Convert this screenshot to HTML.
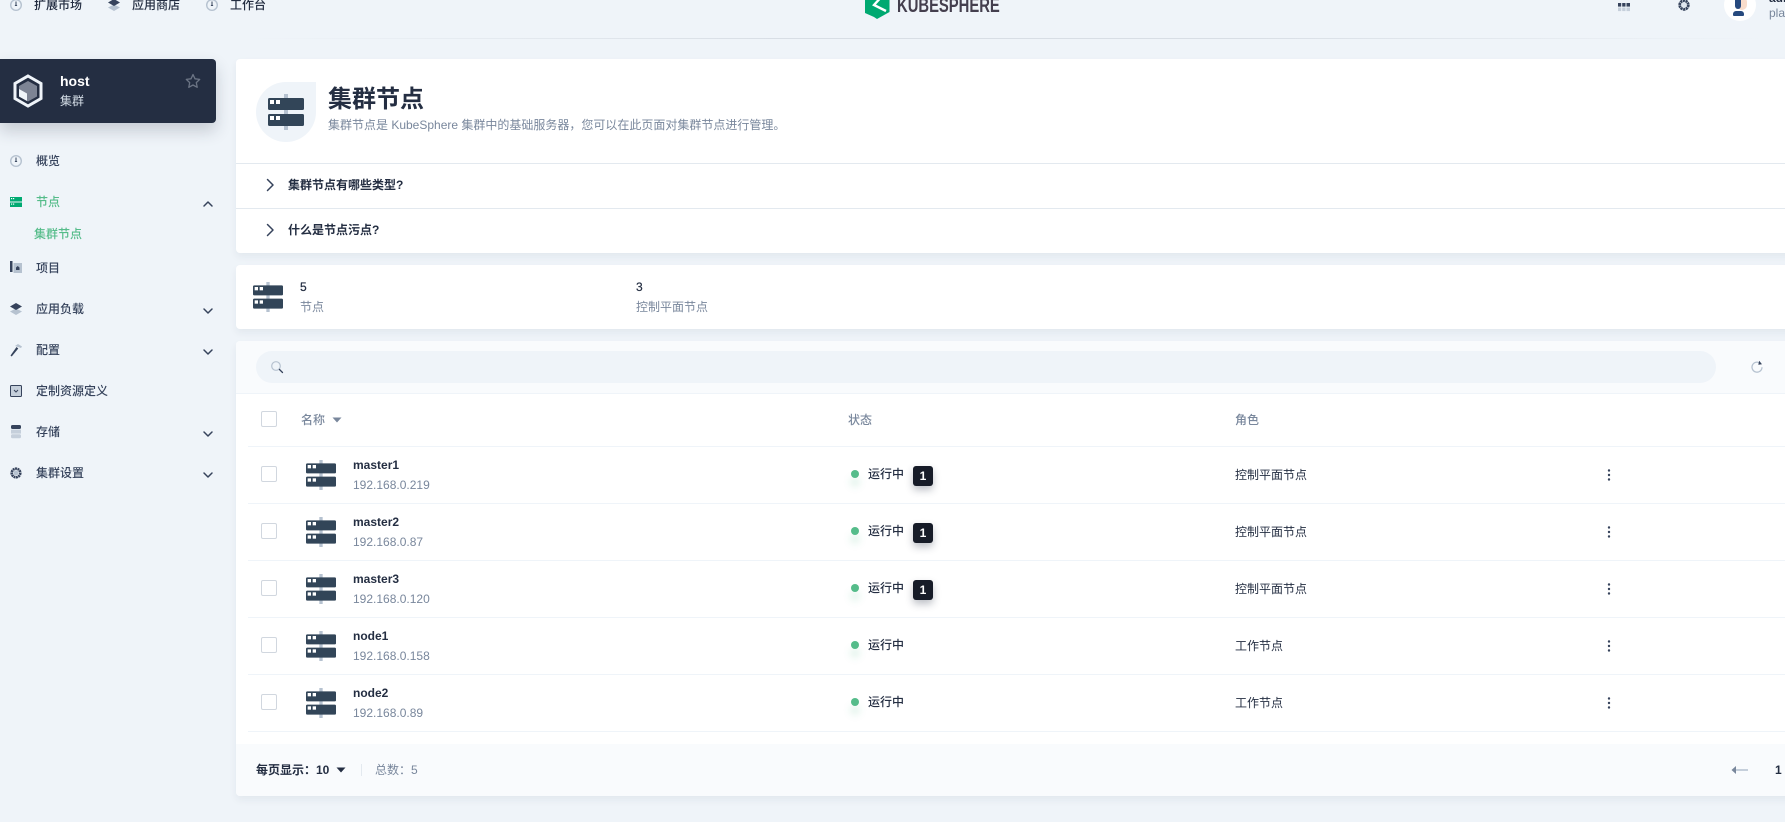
<!DOCTYPE html>
<html lang="zh">
<head>
<meta charset="utf-8">
<title>集群节点</title>
<style>
html,body{margin:0;padding:0;width:1785px;height:822px;overflow:hidden;background:#eff4f9;}
body{position:relative;font-family:"Liberation Sans","Noto Sans CJK SC",sans-serif;font-size:12px;color:#242e42;}
.a,.t,svg.i{position:absolute;}
.t{line-height:16px;height:16px;white-space:nowrap;}
.b{font-weight:700;}
.m{font-weight:500;}
.g{color:#79879c;}
.n{color:#36435c;font-weight:500;}
.card{position:absolute;left:236px;width:1560px;background:#fff;border-radius:4px;box-shadow:0 4px 8px 0 rgba(36,46,66,.06);}
.line{position:absolute;height:1px;background:#eff4f9;}
.cb{position:absolute;left:261px;width:14px;height:14px;border:1px solid #d1d7df;border-radius:2px;background:#fff;}
.dot{position:absolute;left:851px;width:8px;height:8px;border-radius:50%;background:#55bc8a;box-shadow:0 8px 8px rgba(85,188,138,.25);}
.badge{position:absolute;left:913px;width:20px;height:20px;border-radius:3px;background:#171c28;color:#fff;font-weight:700;font-size:12px;line-height:20px;text-align:center;box-shadow:0 4px 8px rgba(36,46,66,.3);}
</style>
</head>
<body>
<svg width="0" height="0" style="position:absolute">
<defs>
<symbol id="srv" viewBox="0 0 36 36">
<rect x="16" y="0" width="4" height="36" fill="#b6c2d0"/>
<rect x="0" y="4" width="36" height="12" rx="1.5" fill="#324558"/>
<rect x="0" y="20" width="36" height="12" rx="1.5" fill="#324558"/>
<rect x="2" y="6" width="4" height="4" fill="#fff"/><rect x="8" y="6" width="4" height="4" fill="#fff"/>
<rect x="2" y="22" width="4" height="4" fill="#fff"/><rect x="8" y="22" width="4" height="4" fill="#fff"/>
</symbol>
<symbol id="dial" viewBox="0 0 12 12">
<circle cx="6" cy="6" r="6" fill="#b6c2d0"/>
<circle cx="6" cy="6" r="4.600" fill="#eff4f9"/>
<path d="M5.500 2.500h1v3.200l.9 1.300H4.600l.9-1.300z" fill="#36435c"/>
</symbol>
<symbol id="layers" viewBox="0 0 12 12">
<path d="M6 5.500 12 8.500 6 12 0 8.500z" fill="#b6c2d0"/>
<path d="M6 0 12 3.500 6 7 0 3.500z" fill="#36435c"/>
</symbol>
<symbol id="chev" viewBox="0 0 12 12">
<path d="M2 4l4 4 4-4" fill="none" stroke="#36435c" stroke-width="1.500" stroke-linecap="round" stroke-linejoin="round"/>
</symbol>
</defs>
</svg>

<!-- top nav -->
<svg class="i" style="left:10px;top:-1px" width="12" height="12"><use href="#dial"/></svg>
<div class="t m" style="left:34px;top:-3px">扩展市场</div>
<svg class="i" style="left:108px;top:-1px" width="12" height="12"><use href="#layers"/></svg>
<div class="t m" style="left:132px;top:-3px">应用商店</div>
<svg class="i" style="left:206px;top:-1px" width="12" height="12"><use href="#dial"/></svg>
<div class="t m" style="left:230px;top:-3px">工作台</div>

<svg class="i" style="left:865px;top:-6px" width="25" height="26" viewBox="0 0 25 26">
<path d="M0 0H24.500V18L12 25 9 23 0 19z" fill="#00a971"/>
<path d="M19 0 9 11 21 17" fill="none" stroke="#fff" stroke-width="2.400"/>
</svg>
<div class="t b" style="left:897px;top:-4px;height:20px;line-height:20px;font-size:20px;color:#443f4e;transform-origin:0 50%;transform:scaleX(.74)">KUBESPHERE</div>

<svg class="i" style="left:1618px;top:0" width="12" height="12" viewBox="0 0 12 12">
<rect y="3" width="12" height="3.600" fill="#36435c"/>
<rect y="7.500" width="12" height="3.600" fill="#c5cfdb"/>
<path d="M3.700 0v12M8 0v12" stroke="#eff4f9" stroke-width="1"/>
</svg>
<svg class="i" style="left:1678px;top:-1px" width="12" height="12" viewBox="0 0 12 12">
<circle cx="6" cy="6" r="4.300" fill="none" stroke="#36435c" stroke-width="2.800" stroke-dasharray="2.200 .5"/>
<circle cx="6" cy="6" r="2.700" fill="#dfe6ee"/>
</svg>
<div class="a" style="left:1724px;top:-11px;width:32px;height:32px;border-radius:50%;background:#fff;overflow:hidden">
<div class="a" style="left:13px;top:8px;width:10px;height:13px;background:#f8dccb;border-radius:5px"></div>
<div class="a" style="left:11px;top:6px;width:6px;height:14px;background:#26497e;border-radius:3px"></div>
<div class="a" style="left:9px;top:22px;width:11px;height:5px;background:#26497e;border-radius:3px 3px 1px 1px"></div>
</div>
<div class="t b" style="left:1769px;top:-10px">admin</div>
<div class="t g" style="left:1769px;top:5px">platform-admin</div>

<div class="a" style="left:250px;top:38px;width:1515px;height:1px;background:linear-gradient(90deg,rgba(209,215,223,0),#d8dee5 35%,#d8dee5 65%,rgba(209,215,223,0))"></div>

<!-- sidebar -->
<div class="a" style="left:0;top:59px;width:216px;height:64px;background:#242e42;border-radius:0 4px 4px 0;box-shadow:0 8px 16px 0 rgba(36,46,66,.2)"></div>
<svg class="i" style="left:13px;top:74px" width="30" height="34" viewBox="0 0 30 34">
<path d="M15 2 28 9.500V24.500L15 32 2 24.500V9.500z" fill="none" stroke="#eff4f9" stroke-width="3"/>
<path d="M15 7 24 12V22.500L15 27.500 6 22.500V12z" fill="#7d8494"/>
<path d="M6 15 14 19.500V27L6 22.500z" fill="#eff4f9"/>
</svg>
<div class="t b" style="left:60px;top:73px;font-size:14px;color:#fff">host</div>
<div class="t" style="left:60px;top:93px;color:#d5dee7">集群</div>
<svg class="i" style="left:185px;top:73px" width="16" height="16" viewBox="0 0 16 16">
<path d="M8 1.500 10 5.800 14.700 6.400 11.300 9.600 12.200 14.300 8 12 3.800 14.300 4.700 9.600 1.300 6.400 6 5.800z" fill="none" stroke="#6b7484" stroke-width="1.300" stroke-linejoin="round"/>
</svg>

<svg class="i" style="left:10px;top:155px" width="12" height="12"><use href="#dial"/></svg>
<div class="t n" style="left:36px;top:153px">概览</div>

<svg class="i" style="left:10px;top:196px" width="12" height="12" viewBox="0 0 12 12">
<rect y="1" width="12" height="4.500" fill="#00aa72"/><rect y="6.500" width="12" height="4.500" fill="#00aa72"/>
<rect x="1" y="2" width="1.200" height="1.200" fill="#fff"/><rect x="3" y="2" width="1.200" height="1.200" fill="#fff"/>
<rect x="1" y="7.500" width="1.200" height="1.200" fill="#fff"/><rect x="3" y="7.500" width="1.200" height="1.200" fill="#fff"/>
</svg>
<div class="t m" style="left:36px;top:194px;color:#55bc8a">节点</div>
<svg class="i" style="left:202px;top:198px;transform:rotate(180deg)" width="12" height="12"><use href="#chev"/></svg>
<div class="t m" style="left:34px;top:226px;color:#55bc8a">集群节点</div>

<svg class="i" style="left:10px;top:261px" width="12" height="12" viewBox="0 0 12 12">
<rect x="3.500" y="2" width="8.500" height="10" fill="#b6c2d0"/>
<rect x="0" y="0" width="2.500" height="11" fill="#36435c"/>
<path d="M6 9V6.500L7.700 5 9.500 6.500V9z" fill="#36435c"/>
</svg>
<div class="t n" style="left:36px;top:260px">项目</div>

<svg class="i" style="left:10px;top:303px" width="12" height="12"><use href="#layers"/></svg>
<div class="t n" style="left:36px;top:301px">应用负载</div>
<svg class="i" style="left:202px;top:305px" width="12" height="12"><use href="#chev"/></svg>

<svg class="i" style="left:10px;top:343px" width="12" height="14" viewBox="0 0 12 14">
<path d="M5 3 8 1 12 3.500 11 5 8 4z" fill="#b6c2d0"/>
<path d="M6.500 4 8.300 5.500 1.700 13.500 .5 12.500z" fill="#36435c"/>
</svg>
<div class="t n" style="left:36px;top:342px">配置</div>
<svg class="i" style="left:202px;top:346px" width="12" height="12"><use href="#chev"/></svg>

<svg class="i" style="left:10px;top:385px" width="12" height="12" viewBox="0 0 12 12">
<rect x=".5" y=".5" width="11" height="11" rx="1" fill="#c5cfdb" stroke="#36435c"/>
<path d="M4 5 6 7 8 5" fill="none" stroke="#36435c"/>
</svg>
<div class="t n" style="left:36px;top:383px">定制资源定义</div>

<svg class="i" style="left:10px;top:425px" width="12" height="14" viewBox="0 0 12 14">
<rect x="1" y="0" width="10" height="4" rx="1.500" fill="#36435c"/>
<rect x="1" y="4.600" width="10" height="4" fill="#c5cfdb"/>
<rect x="1" y="9.200" width="10" height="4" rx="1.500" fill="#c5cfdb"/>
</svg>
<div class="t n" style="left:36px;top:424px">存储</div>
<svg class="i" style="left:202px;top:428px" width="12" height="12"><use href="#chev"/></svg>

<svg class="i" style="left:10px;top:467px" width="12" height="12" viewBox="0 0 12 12">
<circle cx="6" cy="6" r="4.300" fill="none" stroke="#36435c" stroke-width="2.600" stroke-dasharray="1.900 .5"/>
<circle cx="6" cy="6" r="2.500" fill="#b6c2d0"/>
</svg>
<div class="t n" style="left:36px;top:465px">集群设置</div>
<svg class="i" style="left:202px;top:469px" width="12" height="12"><use href="#chev"/></svg>

<!-- panel 1 -->
<div class="card" style="top:59px;height:194px"></div>
<div class="a" style="left:256px;top:82px;width:60px;height:60px;background:#eff4f9;border-radius:50% 0 50% 50%"></div>
<svg class="i" style="left:268px;top:94px" width="36" height="36"><use href="#srv"/></svg>
<div class="t b" style="left:328px;top:84px;height:32px;line-height:32px;font-size:24px;color:#242e42">集群节点</div>
<div class="t g" style="left:328px;top:117px">集群节点是 KubeSphere 集群中的基础服务器，您可以在此页面对集群节点进行管理。</div>
<div class="line" style="left:236px;top:163px;width:1549px;background:#e3e9ef"></div>
<div class="line" style="left:236px;top:208px;width:1549px;background:#e3e9ef"></div>
<svg class="i" style="left:264px;top:177px" width="12" height="16" viewBox="0 0 12 16"><path d="M3.500 2.500 9 8 3.500 13.500" fill="none" stroke="#36435c" stroke-width="1.500" stroke-linecap="round" stroke-linejoin="round"/></svg>
<div class="t b" style="left:288px;top:177px">集群节点有哪些类型?</div>
<svg class="i" style="left:264px;top:222px" width="12" height="16" viewBox="0 0 12 16"><path d="M3.500 2.500 9 8 3.500 13.500" fill="none" stroke="#36435c" stroke-width="1.500" stroke-linecap="round" stroke-linejoin="round"/></svg>
<div class="t b" style="left:288px;top:222px">什么是节点污点?</div>

<!-- panel 2 -->
<div class="card" style="top:265px;height:64px"></div>
<svg class="i" style="left:253px;top:282px" width="30" height="30"><use href="#srv"/></svg>
<div class="t" style="left:300px;top:279px;-webkit-text-stroke:.2px #242e42">5</div>
<div class="t g" style="left:300px;top:299px">节点</div>
<div class="t" style="left:636px;top:279px;-webkit-text-stroke:.2px #242e42">3</div>
<div class="t g" style="left:636px;top:299px">控制平面节点</div>

<!-- panel 3 -->
<div class="card" style="top:341px;height:455px"></div>
<div class="a" style="left:236px;top:341px;width:1549px;height:52px;background:#f9fbfd;border-radius:4px 0 0 0"></div>
<div class="line" style="left:236px;top:393px;width:1549px"></div>
<div class="a" style="left:256px;top:351px;width:1460px;height:32px;border-radius:16px;background:#eff4f9"></div>
<svg class="i" style="left:270px;top:360px" width="14" height="14" viewBox="0 0 14 14">
<circle cx="6" cy="6" r="4.300" fill="none" stroke="#b6c2d0" stroke-width="1.200"/>
<path d="M9.500 9.500 12.500 12.500" stroke="#36435c" stroke-width="1.300" stroke-linecap="round"/>
</svg>
<svg class="i" style="left:1750px;top:360px" width="14" height="14" viewBox="0 0 14 14">
<path d="M10.300 3.400A5 5 0 1 0 12 7.200" fill="none" stroke="#b6c2d0" stroke-width="1.300"/>
<path d="M9.200 .8 12 4.200 8.300 4.800z" fill="#36435c"/>
</svg>

<div class="cb" style="top:411px;"></div>
<div class="t g m" style="left:301px;top:412px">名称</div>
<svg class="i" style="left:332px;top:417px" width="10" height="6" viewBox="0 0 10 6"><path d="M.5 .5H9.500L5 5.500z" fill="#79879c"/></svg>
<div class="t g m" style="left:848px;top:412px">状态</div>
<div class="t g m" style="left:1235px;top:412px">角色</div>
<div class="line" style="left:248px;top:446px;width:1537px"></div>

<!-- row 1 -->
<div class="cb" style="top:466px"></div>
<svg class="i" style="left:306px;top:460px" width="30" height="30"><use href="#srv"/></svg>
<div class="t b" style="left:353px;top:457px">master1</div>
<div class="t g" style="left:353px;top:477px">192.168.0.219</div>
<div class="dot" style="top:470px"></div>
<div class="t m" style="left:868px;top:466px">运行中</div>
<div class="badge" style="top:466px">1</div>
<div class="t" style="left:1235px;top:467px">控制平面节点</div>
<svg class="i" style="left:1607px;top:467px" width="4" height="16" viewBox="0 0 4 16"><circle cx="2" cy="3.500" r="1.200" fill="#36435c"/><circle cx="2" cy="8" r="1.200" fill="#36435c"/><circle cx="2" cy="12.500" r="1.200" fill="#36435c"/></svg>
<div class="line" style="left:248px;top:503px;width:1537px"></div>

<!-- row 2 -->
<div class="cb" style="top:523px"></div>
<svg class="i" style="left:306px;top:517px" width="30" height="30"><use href="#srv"/></svg>
<div class="t b" style="left:353px;top:514px">master2</div>
<div class="t g" style="left:353px;top:534px">192.168.0.87</div>
<div class="dot" style="top:527px"></div>
<div class="t m" style="left:868px;top:523px">运行中</div>
<div class="badge" style="top:523px">1</div>
<div class="t" style="left:1235px;top:524px">控制平面节点</div>
<svg class="i" style="left:1607px;top:524px" width="4" height="16" viewBox="0 0 4 16"><circle cx="2" cy="3.500" r="1.200" fill="#36435c"/><circle cx="2" cy="8" r="1.200" fill="#36435c"/><circle cx="2" cy="12.500" r="1.200" fill="#36435c"/></svg>
<div class="line" style="left:248px;top:560px;width:1537px"></div>

<!-- row 3 -->
<div class="cb" style="top:580px"></div>
<svg class="i" style="left:306px;top:574px" width="30" height="30"><use href="#srv"/></svg>
<div class="t b" style="left:353px;top:571px">master3</div>
<div class="t g" style="left:353px;top:591px">192.168.0.120</div>
<div class="dot" style="top:584px"></div>
<div class="t m" style="left:868px;top:580px">运行中</div>
<div class="badge" style="top:580px">1</div>
<div class="t" style="left:1235px;top:581px">控制平面节点</div>
<svg class="i" style="left:1607px;top:581px" width="4" height="16" viewBox="0 0 4 16"><circle cx="2" cy="3.500" r="1.200" fill="#36435c"/><circle cx="2" cy="8" r="1.200" fill="#36435c"/><circle cx="2" cy="12.500" r="1.200" fill="#36435c"/></svg>
<div class="line" style="left:248px;top:617px;width:1537px"></div>

<!-- row 4 -->
<div class="cb" style="top:637px"></div>
<svg class="i" style="left:306px;top:631px" width="30" height="30"><use href="#srv"/></svg>
<div class="t b" style="left:353px;top:628px">node1</div>
<div class="t g" style="left:353px;top:648px">192.168.0.158</div>
<div class="dot" style="top:641px"></div>
<div class="t m" style="left:868px;top:637px">运行中</div>
<div class="t" style="left:1235px;top:638px">工作节点</div>
<svg class="i" style="left:1607px;top:638px" width="4" height="16" viewBox="0 0 4 16"><circle cx="2" cy="3.500" r="1.200" fill="#36435c"/><circle cx="2" cy="8" r="1.200" fill="#36435c"/><circle cx="2" cy="12.500" r="1.200" fill="#36435c"/></svg>
<div class="line" style="left:248px;top:674px;width:1537px"></div>

<!-- row 5 -->
<div class="cb" style="top:694px"></div>
<svg class="i" style="left:306px;top:688px" width="30" height="30"><use href="#srv"/></svg>
<div class="t b" style="left:353px;top:685px">node2</div>
<div class="t g" style="left:353px;top:705px">192.168.0.89</div>
<div class="dot" style="top:698px"></div>
<div class="t m" style="left:868px;top:694px">运行中</div>
<div class="t" style="left:1235px;top:695px">工作节点</div>
<svg class="i" style="left:1607px;top:695px" width="4" height="16" viewBox="0 0 4 16"><circle cx="2" cy="3.500" r="1.200" fill="#36435c"/><circle cx="2" cy="8" r="1.200" fill="#36435c"/><circle cx="2" cy="12.500" r="1.200" fill="#36435c"/></svg>
<div class="line" style="left:248px;top:731px;width:1537px"></div>

<!-- footer -->
<div class="a" style="left:236px;top:744px;width:1549px;height:52px;background:#f9fbfd;border-radius:0 0 0 4px"></div>
<div class="t b" style="left:256px;top:762px">每页显示：</div>
<div class="t b" style="left:316px;top:762px">10</div>
<svg class="i" style="left:336px;top:767px" width="10" height="6" viewBox="0 0 10 6"><path d="M.5 .5H9.500L5 5.500z" fill="#242e42"/></svg>
<div class="a" style="left:361px;top:764px;width:1px;height:12px;background:#e3e9ef"></div>
<div class="t g" style="left:375px;top:762px">总数：5</div>
<svg class="i" style="left:1731px;top:765px" width="18" height="10" viewBox="0 0 18 10">
<rect x="4" y="4" width="13" height="2" fill="#c5cfdb"/>
<path d="M5 1 .5 5 5 9z" fill="#79879c"/>
</svg>
<div class="t b" style="left:1775px;top:762px">1</div>
</body>
</html>
